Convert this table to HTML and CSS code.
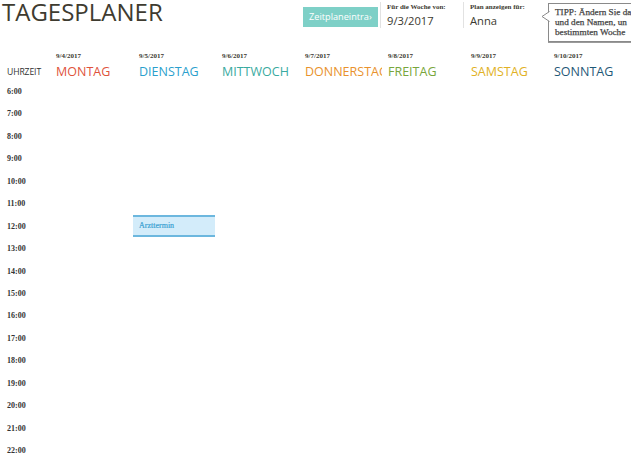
FILE: index.html
```html
<!DOCTYPE html>
<html lang="de">
<head>
<meta charset="utf-8">
<title>Tagesplaner</title>
<link rel="stylesheet" href="styles.css">
</head>
<body>
<div class="page">
  <header class="top">
    <h1 class="title">TAGESPLANER</h1>
    <div class="btn">Zeitplaneintra›</div>
    <div class="field f1">
      <div class="flabel">Für die Woche von:</div>
      <div class="fvalue">9/3/2017</div>
    </div>
    <div class="field f2">
      <div class="flabel">Plan anzeigen für:</div>
      <div class="fvalue">Anna</div>
    </div>
    <div class="tip">
      <svg class="tip-arrow" width="9" height="12" viewBox="0 0 9 12"><polyline points="8.5,0.5 1,5.5 8.5,10.5" fill="#fff" stroke="#8a8a8a" stroke-width="1"/></svg>
      <div class="tip-text">TIPP: Ändern Sie da<br>und den Namen, un<br>bestimmten Woche</div>
    </div>
  </header>

  <div class="dayhead">
    <div class="timehead">UHRZEIT</div>
    <div class="day"><div class="date">9/4/2017</div><div class="dname mon">MONTAG</div></div>
    <div class="day"><div class="date">9/5/2017</div><div class="dname tue">DIENSTAG</div></div>
    <div class="day"><div class="date">9/6/2017</div><div class="dname wed">MITTWOCH</div></div>
    <div class="day"><div class="date">9/7/2017</div><div class="dname thu">DONNERSTAG</div></div>
    <div class="day"><div class="date">9/8/2017</div><div class="dname fri">FREITAG</div></div>
    <div class="day"><div class="date">9/9/2017</div><div class="dname sat">SAMSTAG</div></div>
    <div class="day"><div class="date">9/10/2017</div><div class="dname sun">SONNTAG</div></div>
  </div>

  <div class="rows">
    <div class="row"><div class="time">6:00</div></div>
    <div class="row"><div class="time">7:00</div></div>
    <div class="row"><div class="time">8:00</div></div>
    <div class="row"><div class="time">9:00</div></div>
    <div class="row"><div class="time">10:00</div></div>
    <div class="row"><div class="time">11:00</div></div>
    <div class="row"><div class="time">12:00</div><div class="cell"></div><div class="cell"><div class="event">Arzttermin</div></div></div>
    <div class="row"><div class="time">13:00</div></div>
    <div class="row"><div class="time">14:00</div></div>
    <div class="row"><div class="time">15:00</div></div>
    <div class="row"><div class="time">16:00</div></div>
    <div class="row"><div class="time">17:00</div></div>
    <div class="row"><div class="time">18:00</div></div>
    <div class="row"><div class="time">19:00</div></div>
    <div class="row"><div class="time">20:00</div></div>
    <div class="row"><div class="time">21:00</div></div>
    <div class="row"><div class="time">22:00</div></div>
  </div>
</div>
</body>
</html>
```

FILE: styles.css
```css
html, body {
  margin: 0;
  padding: 0;
  background: #fff;
}
body {
  width: 631px;
  height: 456px;
  overflow: hidden;
  font-family: "Open Sans", sans-serif;
  color: #3b3a30;
}
.page {
  width: 631px;
  overflow: hidden;
}
.top {
  display: flex;
  align-items: flex-start;
  height: 48px;
}
.top > * {
  flex: none;
}
.title {
  margin: 0;
  width: 301px;
  padding-left: 2px;
  font-family: "Open Sans", sans-serif;
  font-weight: 400;
  font-size: 24px;
  line-height: 26px;
  margin-top: -1px;
  color: #3e3b30;
  white-space: nowrap;
}
.btn {
  margin-top: 7px;
  width: 75px;
  height: 20px;
  background: #7ed0c7;
  color: #fff;
  font-size: 9.2px;
  line-height: 20px;
  padding-left: 6px;
  box-sizing: border-box;
  white-space: nowrap;
}
.field {
  margin-top: 2px;
  height: 26px;
  border-left: 1px solid #e2e2e2;
  padding-left: 6px;
  box-sizing: border-box;
}
.f1 {
  margin-left: 2px;
  width: 83px;
}
.f2 {
  width: 78px;
}
.flabel {
  font-family: "Liberation Serif", serif;
  font-weight: 700;
  font-size: 7px;
  line-height: 9px;
  margin-top: 1px;
  color: #3b3a30;
  white-space: nowrap;
}
.fvalue {
  font-size: 11.2px;
  line-height: 16px;
  margin-top: 1px;
  color: #3b3a30;
  white-space: nowrap;
}
.tip {
  position: relative;
  margin-left: 7px;
  margin-top: 3px;
  width: 83px;
  height: 39px;
  border: 1px solid #8a8a8a;
  border-right: none;
  box-shadow: 0 1px 0 #9a9a9a;
  box-sizing: border-box;
  background: #fff;
}
.tip-arrow {
  position: absolute;
  left: -8px;
  top: 7px;
}
.tip-text {
  padding: 3px 0 0 6px;
  font-family: "Liberation Serif", serif;
  font-weight: 400;
  font-size: 9.2px;
  line-height: 10px;
  color: #444;
  white-space: nowrap;
  overflow: hidden;
  -webkit-text-stroke: 0.25px #444;
}
.dayhead {
  display: flex;
  height: 32px;
}
.timehead {
  width: 50px;
  padding-left: 7px;
  box-sizing: border-box;
  font-size: 8.6px;
  line-height: 10px;
  padding-top: 19px;
  color: #2f2f2f;
  letter-spacing: -0.1px;
}
.day {
  width: 83px;
  padding-left: 6px;
  box-sizing: border-box;
  overflow: hidden;
}
.date {
  font-family: "Liberation Serif", serif;
  font-weight: 700;
  font-size: 7px;
  line-height: 9px;
  margin-top: 4px;
  color: #3b3a30;
}
.dname {
  font-size: 12.5px;
  line-height: 16px;
  margin-top: 3px;
  white-space: nowrap;
}
.mon { color: #e0533b; }
.tue { color: #2b9fcd; }
.wed { color: #3aaaa0; }
.thu { color: #e9922c; }
.fri { color: #78a63c; }
.sat { color: #e1b124; }
.sun { color: #1f5877; }
.rows {
  display: flex;
  flex-direction: column;
}
.row {
  display: flex;
  height: 22.44px;
  flex: none;
}
.time {
  width: 50px;
  padding-left: 7px;
  padding-top: 2px;
  box-sizing: border-box;
  font-family: "Liberation Serif", serif;
  font-weight: 700;
  font-size: 8px;
  line-height: 20.44px;
  color: #333;
}
.cell {
  width: 83px;
  height: 100%;
}
.event {
  width: 82px;
  height: 100%;
  box-sizing: border-box;
  background: #d3ecfa;
  border-top: 2px solid #6cb7de;
  border-bottom: 2px solid #6cb7de;
  padding-left: 6px;
  font-family: "Liberation Serif", serif;
  font-size: 8px;
  line-height: 18px;
  color: #3ba2d2;
  -webkit-text-stroke: 0.2px #3ba2d2;
}
```
